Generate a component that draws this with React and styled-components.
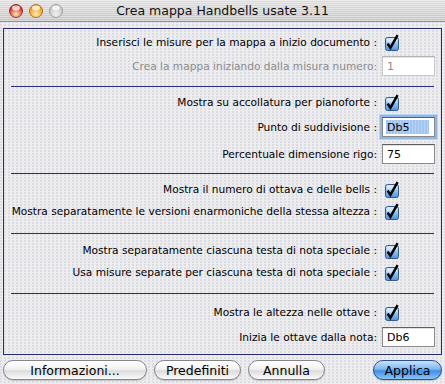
import React from 'react';
import styled, { createGlobalStyle } from 'styled-components';

const GlobalStyle = createGlobalStyle`
  html, body {
    margin: 0;
    padding: 0;
  }
  body {
    width: 445px;
    height: 384px;
    overflow: hidden;
    font-family: 'DejaVu Sans', 'Liberation Sans', sans-serif;
  }
`;

const Window = styled.div`
  width: 445px;
  height: 384px;
  display: flex;
  flex-direction: column;
  background-color: #ededed;
  background-image: radial-gradient(circle at 1px 1px, #dcdce6 0.8px, transparent 1.1px);
  background-size: 4px 3px;
`;

const TitleBar = styled.div`
  box-sizing: border-box;
  height: 22px;
  display: flex;
  align-items: center;
  position: relative;
  border-bottom: 1px solid #8e8e8e;
  background-color: #d6d6d6;
  background-image: repeating-linear-gradient(
      to bottom,
      rgba(255, 255, 255, 0.35) 0 1px,
      rgba(0, 0, 0, 0.03) 1px 2px
    ),
    linear-gradient(to bottom, #e4e4e4, #cacaca);
`;

const Lights = styled.div`
  display: flex;
  gap: 6px;
  padding-left: 9px;
`;

const Title = styled.div`
  position: absolute;
  left: 0;
  right: 0;
  text-align: center;
  font-size: 12.5px;
  color: #111;
  pointer-events: none;
`;

const Panel = styled.div`
  margin: 6px 3px 0 3px;
  border: 1px solid #2a2a6c;
  display: flex;
  flex-direction: column;
`;

const Section = styled.div`
  padding: ${(p) => p.$top}px 0 ${(p) => p.$bottom}px 0;
`;

const Separator = styled.div`
  height: 1px;
  margin: 0 7px;
  background: #2d2d70;
`;

const Row = styled.div`
  height: ${(p) => p.$h}px;
  display: grid;
  grid-template-columns: 1fr 53px;
  column-gap: 5px;
  align-items: center;
  padding-right: 6px;
`;

const Label = styled.div`
  text-align: right;
  white-space: nowrap;
  font-size: 10.6px;
  color: ${(p) => (p.$disabled ? '#8c8c8c' : '#000')};
`;

const CheckCell = styled.div`
  padding-left: 3px;
  display: flex;
  align-items: center;
  height: 18px;
`;

const Field = styled.div`
  box-sizing: border-box;
  width: 53px;
  height: 20px;
  background: #fff;
  border: 1px solid ${(p) => (p.$disabled ? '#c8c8c8' : '#8a8a8a')};
  border-top-color: ${(p) => (p.$disabled ? '#b4b4b4' : '#5e5e5e')};
  box-shadow: ${(p) =>
    p.$focus ? '0 0 0 2px #8fb6e4, 0 0 0 3px #b8d2f0' : 'inset 0 1px 0 #e2e2e2'};
  display: flex;
  align-items: center;
  padding-left: 4px;
  font-size: 11px;
  color: ${(p) => (p.$disabled ? '#8c8c8c' : '#000')};
`;

const Selected = styled.span`
  display: flex;
  align-items: center;
  height: 14px;
  padding: 0 20px 0 1px;
  margin-left: -1px;
  background-color: #b6d3f5;
  background-image: radial-gradient(circle at 1px 1px, #a3c4ee 0.7px, transparent 1px);
  background-size: 3px 2px;
`;

const Footer = styled.div`
  display: flex;
  align-items: center;
  gap: 7px;
  padding: 0 3px;
  margin-top: 5px;
`;

const Spacer = styled.div`
  flex: 1;
`;

const Button = styled.div`
  box-sizing: border-box;
  width: ${(p) => p.$w}px;
  height: 20px;
  border-radius: 10px;
  display: flex;
  align-items: center;
  justify-content: center;
  font-size: 12.5px;
  color: #000;
  border: 1px solid ${(p) => (p.$primary ? '#2b4f89' : '#868686')};
  background: ${(p) =>
    p.$primary
      ? 'linear-gradient(to bottom, #c8e2fb 0%, #7db8f2 45%, #3f8ee6 55%, #8ac6fb 100%)'
      : 'linear-gradient(to bottom, #ffffff 0%, #f2f2f2 45%, #dcdcdc 55%, #fbfbfb 100%)'};
  box-shadow: 0 1px 1px rgba(0, 0, 0, 0.18);
`;

function Light({ id, color, rim, dim }) {
  return (
    <svg width="14" height="14" viewBox="0 0 14 14">
      <defs>
        <radialGradient id={`g-${id}`} cx="50%" cy="75%" r="60%">
          <stop offset="0%" stopColor={dim ? '#f4f4f4' : '#ffe9a8'} stopOpacity="0.9" />
          <stop offset="100%" stopColor={color} />
        </radialGradient>
      </defs>
      <circle cx="7" cy="7" r="6.5" fill={`url(#g-${id})`} stroke={rim} strokeWidth="0.8" />
      <ellipse cx="7" cy="4" rx="4" ry="2.4" fill="#fff" opacity="0.75" />
    </svg>
  );
}

function CheckBox() {
  return (
    <svg width="16" height="17" viewBox="0 0 16 17">
      <defs>
        <linearGradient id="cb" x1="0" y1="0" x2="0" y2="1">
          <stop offset="0%" stopColor="#cfe6fb" />
          <stop offset="50%" stopColor="#8dc0f0" />
          <stop offset="100%" stopColor="#4a92e0" />
        </linearGradient>
      </defs>
      <rect x="0.5" y="3.5" width="13" height="13" rx="2" fill="url(#cb)" stroke="#35598c" />
      <rect x="2" y="4.5" width="10" height="4" rx="1.5" fill="#fff" opacity="0.45" />
      <path d="M2.6 9.6 L5.4 13.8 L12.6 1.2" fill="none" stroke="#000" strokeWidth="2.5" strokeLinejoin="miter" />
    </svg>
  );
}

function CheckRow({ label }) {
  return (
    <Row $h={22}>
      <Label>{label}</Label>
      <CheckCell>
        <CheckBox />
      </CheckCell>
    </Row>
  );
}

function FieldRow({ label, value, disabled, focus, h = 26 }) {
  return (
    <Row $h={h}>
      <Label $disabled={disabled}>{label}</Label>
      <Field $disabled={disabled} $focus={focus}>
        {focus ? <Selected>{value}</Selected> : value}
      </Field>
    </Row>
  );
}

export default function App() {
  return (
    <>
      <GlobalStyle />
      <Window>
        <TitleBar>
          <Lights>
            <Light id="close" color="#d8232a" rim="#8a1a1a" />
            <Light id="min" color="#f09a10" rim="#9a6208" />
            <Light id="zoom" color="#c4c4c4" rim="#949494" dim />
          </Lights>
          <Title>Crea mappa Handbells usate 3.11</Title>
        </TitleBar>

        <Panel>
          <Section $top={2} $bottom={7}>
            <CheckRow label="Inserisci le misure per la mappa a inizio documento :" />
            <FieldRow label="Crea la mappa iniziando dalla misura numero:" value="1" disabled />
          </Section>
          <Separator />
          <Section $top={4} $bottom={6}>
            <CheckRow label="Mostra su accollatura per pianoforte :" />
            <FieldRow label="Punto di suddivisione :" value="Db5" focus h={28} />
            <FieldRow label="Percentuale dimensione rigo:" value="75" />
          </Section>
          <Separator />
          <Section $top={4} $bottom={11}>
            <CheckRow label="Mostra il numero di ottava e delle bells :" />
            <CheckRow label="Mostra separatamente le versioni enarmoniche della stessa altezza :" />
          </Section>
          <Separator />
          <Section $top={5} $bottom={10}>
            <CheckRow label="Mostra separatamente ciascuna testa di nota speciale :" />
            <CheckRow label="Usa misure separate per ciascuna testa di nota speciale :" />
          </Section>
          <Separator />
          <Section $top={7} $bottom={3}>
            <CheckRow label="Mostra le altezza nelle ottave :" />
            <FieldRow label="Inizia le ottave dalla nota:" value="Db6" h={28} />
          </Section>
        </Panel>

        <Footer>
          <Button $w={144}>Informazioni...</Button>
          <Button $w={87}>Predefiniti</Button>
          <Button $w={77}>Annulla</Button>
          <Spacer />
          <Button $w={69} $primary>Applica</Button>
        </Footer>
      </Window>
    </>
  );
}
